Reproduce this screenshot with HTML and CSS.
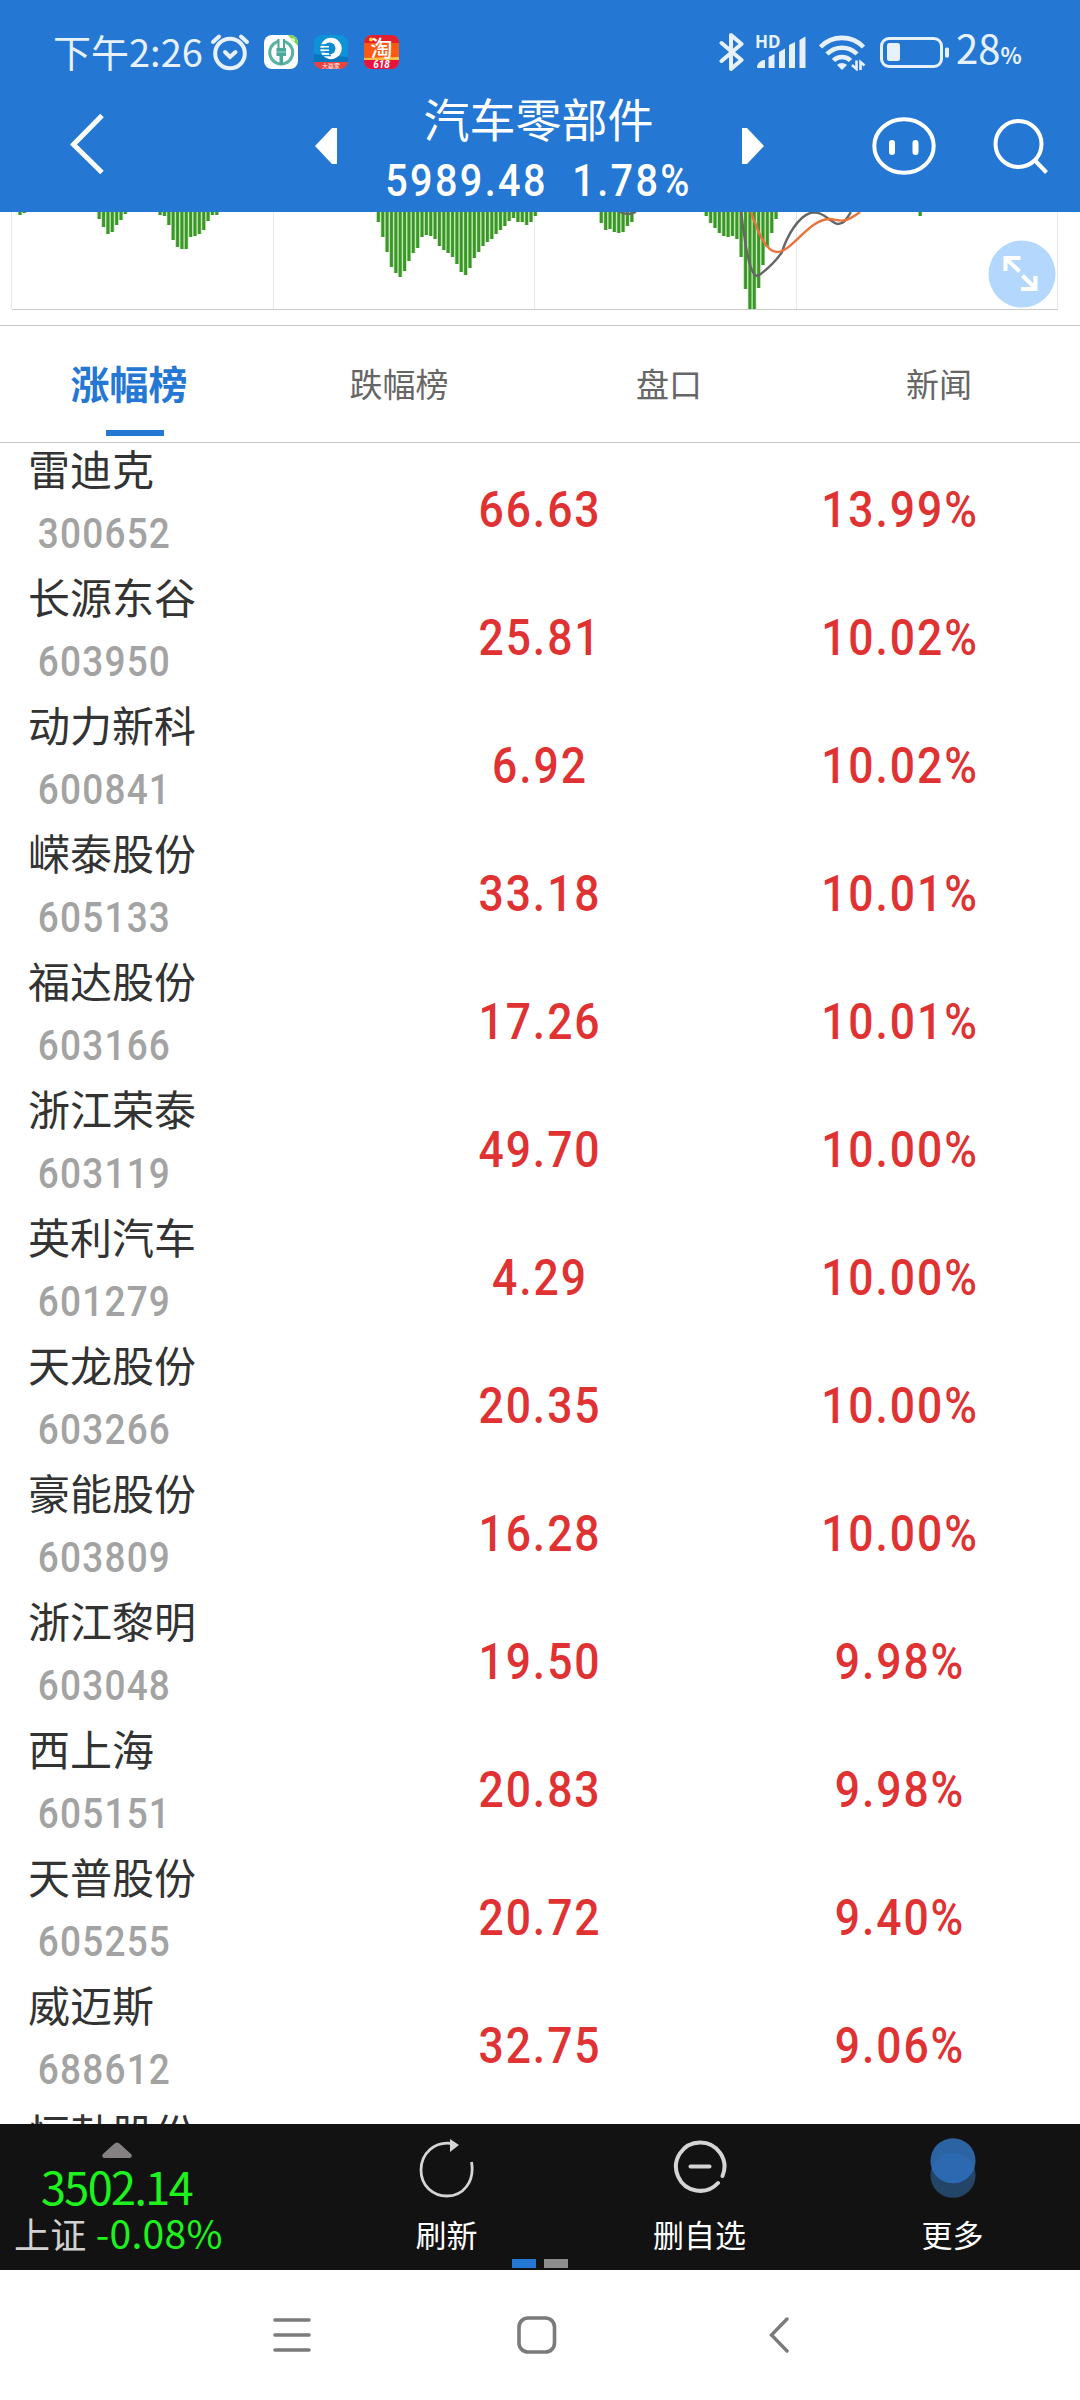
FILE: index.html
```html
<!DOCTYPE html>
<html lang="zh-CN">
<head>
    <meta charset="UTF-8">
    <meta name="viewport" content="width=device-width, initial-scale=1.0">
    <title>汽车零部件</title>
    <link rel="stylesheet" href="styles.css">
</head>
<body>
    <header class="header">
        <div class="status-bar">
            <span class="time">下午2:26</span>
            <svg class="alarm" width="40" height="38" viewBox="0 0 40 38" fill="none" stroke="#e6f1fc" stroke-width="4" stroke-linecap="round">
                <circle cx="20" cy="20.500" r="14.800"/>
                <path d="M3 9L9 3.500M37 9L31 3.500"/>
                <path d="M15 19l5 5 5.500-5"/>
            </svg>
            <svg class="app" width="34" height="34" viewBox="0 0 34 34">
                <rect width="34" height="34" rx="8" fill="#fff"/>
                <path d="M24 0h2a8 8 0 0 1 8 8v3z" fill="#79d24c"/>
                <circle cx="29" cy="5" r="2" fill="#d9f5c9"/>
                <circle cx="17.200" cy="17.500" r="11.500" fill="none" stroke="#5cb3a3" stroke-width="3"/>
                <path d="M14 3h6.500v10H14z" fill="#fff"/>
                <path d="M14.500 4v9M20 4v9" stroke="#4aa89a" stroke-width="2"/>
                <path d="M12.500 13h9.500v8h-3v9h-3.500v-9h-3z" fill="#4aa89a"/>
                <path d="M12.500 17h9.500" stroke="#9bd5c8" stroke-width="1"/>
            </svg>
            <svg class="app" width="34" height="34" viewBox="0 0 34 34">
                <rect width="34" height="34" rx="8" fill="#0c93d8"/>
                <path d="M0 19l34 3v5H0z" fill="#0876bd"/>
                <path d="M0 27h34a8 8 0 0 1-8 7H8a8 8 0 0 1-8-7z" fill="#e84340"/>
                <circle cx="17" cy="13.500" r="10.700" fill="#fff"/>
                <circle cx="15.500" cy="13.500" r="6" fill="#0c8bd0"/>
                <path d="M5 10h10M5 13.500h10M5 17h10M8 20.500h9" stroke="#0c8bd0" stroke-width="1.400"/>
                <path d="M8 11.700h7M8 15.200h7M8 18.700h7" stroke="#fff" stroke-width="1.400"/>
                <text x="17" y="32.500" class="app-label">大赢家</text>
            </svg>
            <svg class="app" width="35" height="34" viewBox="0 0 35 34">
                <rect width="35" height="34" rx="8" fill="#fa5a14"/>
                <path d="M0 8a8 8 0 0 1 8-8h19a8 8 0 0 1 8 8z" fill="#e02030"/>
                <path d="M0 23l35-1v3H0z" fill="#ffc04a"/>
                <path d="M0 25h35v1a8 8 0 0 1-8 8H8a8 8 0 0 1-8-8z" fill="#e8133c"/>
                <circle cx="7" cy="4.500" r="2" fill="#ffd21e"/>
                <text x="17.500" y="20.500" class="app-tao">淘</text>
                <text x="17.500" y="33.300" class="app-618">618</text>
            </svg>
            <div class="status-right">
                <svg width="26" height="42" viewBox="0 0 26 42" fill="none" stroke="#e6f1fc" stroke-width="4" stroke-linejoin="round" stroke-linecap="round">
                    <path d="M2.500 12L22.500 29 12 38V4l10.500 9L2.500 30"/>
                </svg>
                <svg class="signal" width="52" height="36" viewBox="0 0 52 36" fill="#e6f1fc">
                    <text x="0" y="14" class="hd">HD</text>
                    <path d="M2 33q0-4 6-7h2v8H3q-1 0-1-1zM13.500 23l6-3v14h-6zM24 18l6-3.500V34h-6zM34 11l6-3v26h-6zM44.500 6l6-3.500V34h-6z"/>
                </svg>
                <svg class="wifi" width="48" height="38" viewBox="0 0 48 38" fill="none" stroke="#e6f1fc" stroke-width="4.600">
                    <path d="M2.500 14a30 30 0 0 1 43 0M9 21a21 21 0 0 1 30 0M15.500 27.500a12 12 0 0 1 17 0"/>
                    <path d="M19 32a7 7 0 0 1 10 0L24 37z" fill="#e6f1fc" stroke="none"/>
                    <path d="M34 32l4.500 4V27.500M42.500 37V29l4 3.500" stroke-width="2.600"/>
                </svg>
                <svg class="battery" width="70" height="31" viewBox="0 0 70 31">
                    <rect x="1.500" y="1.500" width="60" height="28" rx="7.500" fill="none" stroke="#e6f1fc" stroke-width="3"/>
                    <rect x="7" y="6" width="13" height="18" rx="2.500" fill="#e6f1fc"/>
                    <rect x="65" y="10.500" width="4" height="10" rx="1.500" fill="#e6f1fc"/>
                </svg>
                <span class="percent">28<small>%</small></span>
            </div>
        </div>
        <div class="title-bar">
            <svg class="back" width="36" height="62" viewBox="0 0 36 62" fill="none" stroke="#fff" stroke-width="5">
                <path d="M33 2.500L4.500 31.500 33 59.500"/>
            </svg>
            <svg class="prev" width="22" height="36" viewBox="0 0 22 36" fill="#fff"><path d="M22 0v36h-5L0 18 17 0z"/></svg>
            <div class="title">
                <h1>汽车零部件</h1>
                <p class="din">5989.48&nbsp; 1.78%</p>
            </div>
            <svg class="next" width="22" height="36" viewBox="0 0 22 36" fill="#fff"><path d="M0 0v36h5L22 18 5 0z"/></svg>
            <svg class="robot" width="64" height="60" viewBox="0 0 64 60">
                <ellipse cx="32" cy="30" rx="29.700" ry="26.800" fill="none" stroke="#fff" stroke-width="4"/>
                <rect x="17" y="24" width="6" height="15" rx="3" fill="#fff"/>
                <rect x="40.500" y="24" width="6" height="15" rx="3" fill="#fff"/>
            </svg>
            <svg class="search" width="56" height="56" viewBox="0 0 56 56" fill="none" stroke="#fff" stroke-width="4">
                <circle cx="25.500" cy="25" r="23"/>
                <path d="M42 41.500l11.500 12"/>
            </svg>
        </div>
    </header>

    <section class="chart">
        <svg id="macd" width="1080" height="113" viewBox="0 0 1080 113" fill="none">
            <path d="M11.500 0v97M273.500 0v97M534.500 0v97M796.500 0v97M1057.500 0v97" stroke="#e9e9e9"/>
            <path d="M12 97.500h1046" stroke="#cbcbcb"/>
            <g id="bars"></g>
            <path d="M620 0q8 4 16 0" stroke="#666" stroke-width="2.400"/>
            <path d="M741 0C744 20 747 52 754 62q2 3 6 0.500C770 55 776 49 782 40C787 24 798 5 810 1C824 -2 830 11 838 12C845 12 848 4 851 0" stroke="#666" stroke-width="2.400"/>
            <path d="M751 0C757 17 765 40 777 40C792 40 808 8 829 7C835 7 840 10 846 8C852 6 856 3 860 0" stroke="#e8733c" stroke-width="2.400"/>
        </svg>
        <svg class="expand" width="68" height="68" viewBox="0 0 68 68" fill="none" stroke="#fff" stroke-width="4">
            <circle cx="34" cy="34" r="33.500" fill="#b3d7fd" stroke="none"/>
            <path d="M17.500 31V18h15M18 18.500l13.500 13M47.500 36v13H33M47 48L34.500 35.500"/>
        </svg>
    </section>

    <nav class="tabs">
        <a class="tab active">涨幅榜</a>
        <a class="tab">跌幅榜</a>
        <a class="tab">盘口</a>
        <a class="tab">新闻</a>
    </nav>

    <main class="list" id="list"></main>

    <footer class="toolbar">
        <div class="index">
            <svg width="30" height="16" viewBox="0 0 30 16" fill="#858182"><path d="M2 16q-3-1-1-4L12 2q3-3 6 0l11 10q2 3-1 4z"/></svg>
            <span class="index-value">3502.14</span>
            <span class="index-change"><b>上证</b> -0.08%</span>
        </div>
        <div class="tool">
            <svg width="56" height="60" viewBox="0 0 56 60" fill="none" stroke="#d6d4d4" stroke-width="2.800">
                <path d="M33 4.500C15 2 2 15 2 31C2 47 14 57 28 57C44 57 56 43 52.500 23"/>
                <path d="M31 0l9 6-9 7z" fill="#d6d4d4" stroke="none"/>
            </svg>
            <span>刷新</span>
        </div>
        <div class="tool">
            <svg width="56" height="60" viewBox="0 0 56 60" fill="none" stroke="#d6d4d4" stroke-width="4" stroke-linecap="round">
                <path d="M50.500 37A24.200 24.200 0 1 0 46 44"/>
                <path d="M18.500 27.500h19"/>
            </svg>
            <span>删自选</span>
        </div>
        <div class="tool">
            <svg width="56" height="64" viewBox="0 0 56 64">
                <circle cx="28" cy="38.500" r="23.300" fill="#234567"/>
                <circle cx="28" cy="23.500" r="23.300" fill="#2b63a3"/>
                <path d="M6 31a23.300 23.300 0 0 1 44 0a23.300 23.300 0 0 1-44 0z" fill="#2c69b0"/>
            </svg>
            <span>更多</span>
        </div>
        <div class="pager"><i class="on"></i><i></i></div>
    </footer>

    <div class="nav-bar">
        <svg width="38" height="36" viewBox="0 0 38 36" stroke="#7b7b7b" stroke-width="3.600" stroke-linecap="round"><path d="M2 3h34M2 18h34M2 33h34"/></svg>
        <svg width="40" height="38" viewBox="0 0 40 38" fill="none" stroke="#7b7b7b" stroke-width="3.600"><rect x="2" y="2" width="35.500" height="34" rx="9"/></svg>
        <svg width="20" height="36" viewBox="0 0 20 36" fill="none" stroke="#7b7b7b" stroke-width="3.400" stroke-linecap="round"><path d="M18 2L2.500 18 18 34"/></svg>
    </div>

    <script>
        const stocks = [
            ['雷迪克', '300652', '66.63', '13.99%'],
            ['长源东谷', '603950', '25.81', '10.02%'],
            ['动力新科', '600841', '6.92', '10.02%'],
            ['嵘泰股份', '605133', '33.18', '10.01%'],
            ['福达股份', '603166', '17.26', '10.01%'],
            ['浙江荣泰', '603119', '49.70', '10.00%'],
            ['英利汽车', '601279', '4.29', '10.00%'],
            ['天龙股份', '603266', '20.35', '10.00%'],
            ['豪能股份', '603809', '16.28', '10.00%'],
            ['浙江黎明', '603048', '19.50', '9.98%'],
            ['西上海', '605151', '20.83', '9.98%'],
            ['天普股份', '605255', '20.72', '9.40%'],
            ['威迈斯', '688612', '32.75', '9.06%'],
            ['恒勃股份', '', '', '']
        ];
        document.getElementById('list').innerHTML = stocks.map(([name, code, price, rate]) => `
            <div class="row">
                <div class="stock"><span class="name">${name}</span><span class="code din">${code}</span></div>
                <span class="num din">${price}</span>
                <span class="num din">${rate}</span>
            </div>`).join('');

        // MACD 绿柱：起始 x 与各柱高度
        const groups = [
            [20, [3, 1]],
            [99.2, [7, 15, 22, 20, 13, 8, 2]],
            [160.1, [3, 4, 13, 28, 35, 37, 37, 25, 24, 22, 18, 9, 3, 3]],
            [378.4, [10, 25, 40, 55, 61, 65, 59, 49, 41, 36, 25, 23, 24, 27, 34, 38, 41, 45, 52, 60, 63, 56, 46, 40, 34, 30, 27, 22, 18, 14, 9, 6, 10, 10, 13, 10, 4]],
            [601.3, [11, 18, 17, 20, 21, 20, 14, 10]],
            [706.3, [4, 11, 16, 21, 24, 25, 24, 27, 45, 77, 97, 97, 76, 53, 35, 21, 7]],
            [920.2, [4]]
        ];
        let bars = '';
        groups.forEach(([x, heights]) => heights.forEach((h, i) => {
            const cx = x + i * 4.36;
            bars += `<rect x="${cx - 2.1}" width="4.2" height="${h}" fill="#a9dc98"/><rect x="${cx - 1.4}" width="2.8" height="${h}" fill="#3a9628"/>`;
        }));
        document.getElementById('bars').innerHTML = bars;
    </script>
</body>
</html>
```
FILE: styles.css
```css
* {
    box-sizing: border-box;
}
body {
    margin: 0;
    width: 1080px;
    height: 2400px;
    overflow: hidden;
    display: flex;
    flex-direction: column;
    background: #fff;
    font-family: "Noto Sans CJK SC", sans-serif;
}
svg {
    display: block;
    flex: none;
}
.din {
    font-family: Roboto, "Noto Sans CJK SC", sans-serif;
    font-weight: 500;
}
.header {
    height: 212px;
    flex: none;
    background: #2577d4;
    color: #fff;
}
.status-bar {
    height: 88px;
    padding: 16px 57px 0 53px;
    display: flex;
    align-items: center;
    color: #e6f1fc;
}
.time {
    width: 157px;
    padding-bottom: 3px;
    font-size: 38px;
    line-height: 50px;
    white-space: nowrap;
}
.alarm {
    margin-right: 14px;
}
.app {
    margin-right: 16px;
}
.app-label {
    font-size: 6px;
    fill: #fff;
    text-anchor: middle;
}
.app-tao {
    font-size: 22px;
    font-weight: 500;
    fill: #fff;
    text-anchor: middle;
}
.app-618 {
    font: italic 700 10px Roboto, sans-serif;
    fill: #fff;
    text-anchor: middle;
}
.status-right {
    margin-left: auto;
    display: flex;
    align-items: center;
}
.signal {
    margin-left: 10px;
}
.hd {
    font: 700 17px "Noto Sans", sans-serif;
}
.wifi {
    margin-left: 11px;
}
.battery {
    margin-left: 14px;
}
.percent {
    margin-left: 6px;
    padding-bottom: 3px;
    font-size: 40px;
    line-height: 50px;
    width: 67px;
    white-space: nowrap;
}
.percent small {
    font-size: 22px;
    font-weight: 700;
}
.title-bar {
    height: 124px;
    display: flex;
    align-items: flex-start;
}
.back {
    margin: 25px 0 0 69px;
}
.prev {
    margin: 40px 0 0 210px;
}
.title {
    width: 405px;
    padding-right: 2px;
    text-align: center;
}
.title h1 {
    margin: 0;
    font-size: 46px;
    line-height: 58px;
    font-weight: 400;
}
.title p {
    margin: 0;
    padding-top: 4px;
    font-size: 45px;
    line-height: 62px;
    letter-spacing: 2.7px;
    white-space: nowrap;
    transform: scaleX(.88);
}
.next {
    margin-top: 40px;
}
.robot {
    margin: 28px 0 0 108px;
}
.search {
    margin: 31px 0 0 57px;
}
.chart {
    height: 113px;
    flex: none;
    position: relative;
}
.expand {
    position: absolute;
    right: 24px;
    top: 28px;
}
.tabs {
    height: 118px;
    flex: none;
    display: grid;
    grid-template-columns: repeat(4, 1fr);
    border-top: 1px solid #c6c6c6;
    border-bottom: 1px solid #c6c6c6;
}
.tab {
    position: relative;
    padding-right: 12px;
    text-align: center;
    font-size: 33px;
    line-height: 114px;
    color: #666;
}
.tab.active {
    font-size: 39px;
    line-height: 112px;
    font-weight: 700;
    color: #2577d4;
}
.tab.active::after {
    content: "";
    position: absolute;
    left: 106px;
    bottom: 6px;
    width: 58px;
    height: 6px;
    background: #2577d4;
}
.list {
    height: 1681px;
    flex: none;
    overflow: hidden;
}
.row {
    height: 128px;
    display: grid;
    grid-template-columns: repeat(3, 1fr);
}
.stock {
    display: flex;
    flex-direction: column;
    padding-left: 28px;
}
.name {
    font-size: 42px;
    line-height: 49px;
    color: #333;
}
.code {
    padding-left: 11px;
    font-size: 42px;
    line-height: 84px;
    letter-spacing: 1.4px;
    color: #a3a3a3;
    transform: scaleX(.88);
    transform-origin: left;
}
.num {
    text-align: center;
    font-size: 50.5px;
    line-height: 134px;
    letter-spacing: 2.2px;
    color: #e03232;
    transform: scaleX(.88);
}
.toolbar {
    position: relative;
    height: 146px;
    flex: none;
    display: flex;
    background: #121212;
    color: #fff;
}
.index {
    width: 233px;
    padding-top: 18px;
    display: flex;
    flex-direction: column;
    align-items: center;
    color: #1cf41c;
}
.index-value {
    margin-top: 4px;
    font-size: 45px;
    line-height: 48px;
    letter-spacing: -1.6px;
}
.index-change {
    width: 100%;
    padding-left: 14px;
    font-size: 39px;
    line-height: 44px;
    letter-spacing: .3px;
    white-space: nowrap;
}
.index-change b {
    font-size: 36px;
    font-weight: 400;
    color: #d2d2d2;
}
.tool {
    width: 253px;
    padding-top: 14px;
    display: flex;
    flex-direction: column;
    align-items: center;
}
.tool:nth-child(2) {
    margin-left: 87px;
}
.tool svg {
    height: 62px;
}
.tool span {
    margin-top: 11px;
    font-size: 31px;
    line-height: 46px;
}
.pager {
    position: absolute;
    left: 512px;
    bottom: 2px;
    display: flex;
    gap: 8px;
}
.pager i {
    width: 24px;
    height: 9px;
    background: #8e8e8e;
}
.pager .on {
    background: #2577d4;
}
.nav-bar {
    height: 130px;
    flex: none;
    display: flex;
    align-items: center;
    padding-left: 273px;
    gap: 206px;
}
.nav-bar svg:last-child {
    margin-left: 6px;
}
```
